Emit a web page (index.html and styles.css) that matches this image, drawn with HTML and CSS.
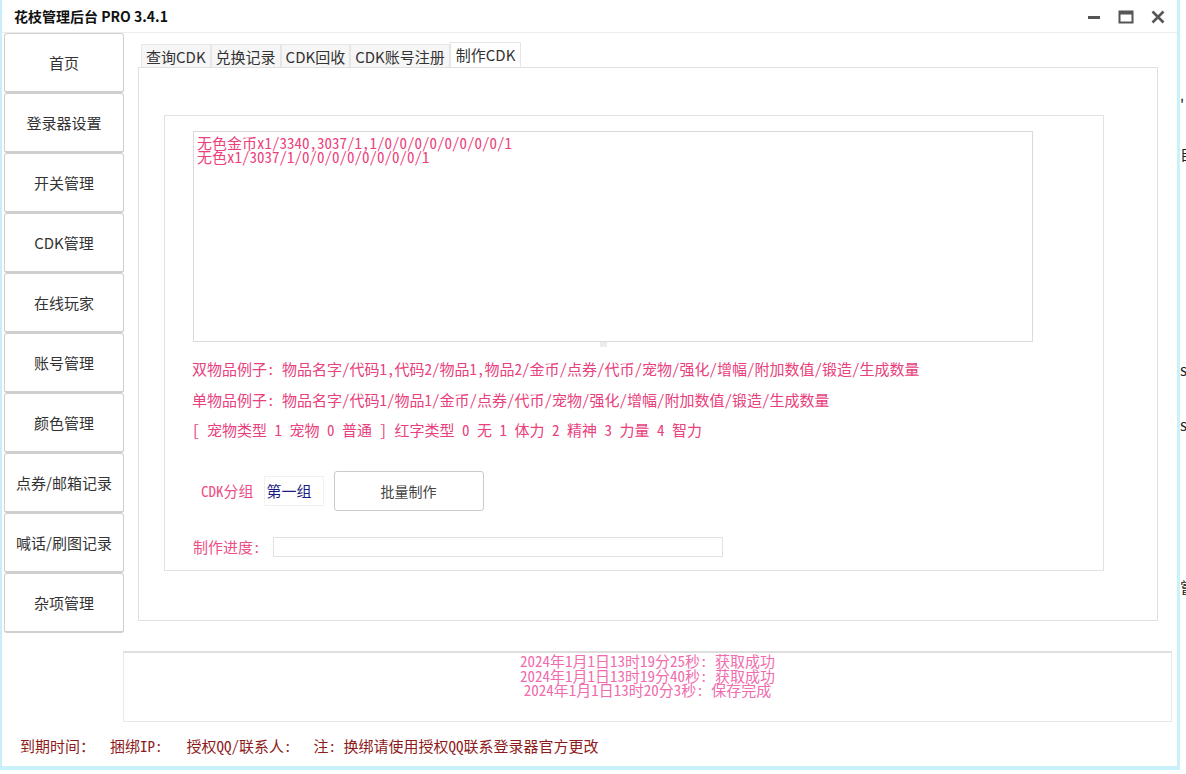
FILE: index.html
```html
<!DOCTYPE html>
<html lang="zh-CN">
<head>
  <meta charset="UTF-8" />
  <title>花枝管理后台 PRO 3.4.1</title>
  <link rel="stylesheet" href="styles.css">
</head>
<body>
  <div class="screen">
    <div class="window">
      <div class="titlebar">
        <span class="title">花枝管理后台 PRO 3.4.1</span>
        <div class="controls">
          <svg width="16" height="16" viewBox="0 0 16 16"><rect x="2" y="7" width="12" height="3" fill="#555"/></svg>
          <svg width="16" height="16" viewBox="0 0 16 16"><rect x="1.5" y="2.5" width="13" height="11" fill="none" stroke="#555" stroke-width="2"/><rect x="1" y="2" width="14" height="3.5" fill="#555"/></svg>
          <svg width="16" height="16" viewBox="0 0 16 16"><path d="M2.5 2.5 L13.5 13.5 M13.5 2.5 L2.5 13.5" stroke="#555" stroke-width="2.6"/></svg>
        </div>
      </div>

      <div class="main">
        <nav class="sidebar">
          <button class="nav-btn">首页</button>
          <button class="nav-btn">登录器设置</button>
          <button class="nav-btn">开关管理</button>
          <button class="nav-btn">CDK管理</button>
          <button class="nav-btn">在线玩家</button>
          <button class="nav-btn">账号管理</button>
          <button class="nav-btn">颜色管理</button>
          <button class="nav-btn">点券/邮箱记录</button>
          <button class="nav-btn">喊话/刷图记录</button>
          <button class="nav-btn">杂项管理</button>
        </nav>

        <section class="content">
          <div class="tabs">
            <span class="tab">查询CDK</span>
            <span class="tab">兑换记录</span>
            <span class="tab">CDK回收</span>
            <span class="tab">CDK账号注册</span>
            <span class="tab active">制作CDK</span>
          </div>

          <div class="panel">
            <div class="group">
              <div class="editor">
                <div>无色金币x1/3340,3037/1,1/0/0/0/0/0/0/0/0/1</div>
                <div>无色x1/3037/1/0/0/0/0/0/0/0/0/1</div>
              </div>
              <span class="grip"></span>

              <div class="hints">
                <p>双物品例子: 物品名字/代码1,代码2/物品1,物品2/金币/点券/代币/宠物/强化/增幅/附加数值/锻造/生成数量</p>
                <p>单物品例子: 物品名字/代码1/物品1/金币/点券/代币/宠物/强化/增幅/附加数值/锻造/生成数量</p>
                <p>[ 宠物类型 1 宠物 0 普通 ] 红字类型 0 无 1 体力 2 精神 3 力量 4 智力</p>
              </div>

              <div class="row-cdk">
                <span class="label">CDK分组</span>
                <span class="group-input">第一组</span>
                <button class="make-btn">批量制作</button>
              </div>

              <div class="row-progress">
                <span class="label">制作进度:</span>
                <span class="progress"></span>
              </div>
            </div>
          </div>
        </section>
      </div>

      <div class="log">
        <div>2024年1月1日13时19分25秒: 获取成功</div>
        <div>2024年1月1日13时19分40秒: 获取成功</div>
        <div>2024年1月1日13时20分3秒: 保存完成</div>
      </div>

      <footer class="status">
        <span>到期时间：</span>
        <span class="gap-a">捆绑IP:</span>
        <span class="gap-b">授权QQ/联系人:</span>
        <span class="gap-c">注: 换绑请使用授权QQ联系登录器官方更改</span>
      </footer>
    </div>

    <div class="behind">
      <span class="frag f1">'</span>
      <span class="frag f2">自</span>
      <span class="frag f3">s</span>
      <span class="frag f4">s</span>
      <span class="frag f5">嘗</span>
    </div>
  </div>
</body>
</html>
```

FILE: styles.css
```css
body {
  margin: 0;
  background: #ffffff;
  font-family: "Noto Sans CJK SC", sans-serif;
  color: #333;
}

.screen {
  display: flex;
  width: 1186px;
  height: 774px;
  overflow: hidden;
}

.window {
  width: 1175px;
  height: 766px;
  background: #ffffff;
  border-left: 2px solid #c9eef8;
  border-right: 3px solid #c9f1fa;
  border-bottom: 4px solid #c9f1fa;
  display: flex;
  flex-direction: column;
}

/* title bar */
.titlebar {
  height: 32px;
  border-bottom: 1px solid #ececec;
  display: flex;
  align-items: center;
  justify-content: space-between;
  padding: 0 11px 0 12px;
}

.title {
  font-size: 14px;
  font-weight: bold;
  color: #111;
  margin-top: -1px;
}

.controls {
  display: flex;
  gap: 16px;
  margin-top: 2px;
}

.controls svg {
  display: block;
}

/* body */
.main {
  display: flex;
  height: 600px;
}

.sidebar {
  width: 120px;
  padding-left: 2px;
  display: flex;
  flex-direction: column;
}

.nav-btn {
  height: 60px;
  width: 120px;
  background: #fff;
  border: 1px solid #cfcfcf;
  border-bottom-width: 2px;
  border-radius: 3px;
  font-family: "Noto Sans CJK SC", sans-serif;
  font-size: 15px;
  color: #333;
  padding: 0;
}

.content {
  flex: 1;
  padding-left: 14px;
}

.tabs {
  display: flex;
  height: 23px;
  margin-top: 11px;
  padding-left: 3px;
  align-items: flex-end;
}

.tab {
  height: 23px;
  line-height: 23px;
  padding: 0 4px;
  font-size: 15px;
  color: #333;
  background: #f6f6f6;
  border: 1px solid #e6e6e6;
  border-bottom: none;
  box-sizing: border-box;
}

.tab.active {
  height: 25px;
  background: #fff;
  padding: 0 5px;
}

.panel {
  width: 1018px;
  height: 552px;
  border: 1px solid #e0e0e0;
  background: #fff;
}

.group {
  width: 938px;
  height: 454px;
  margin: 47px 0 0 25px;
  border: 1px solid #e2e2e2;
}

.editor {
  width: 832px;
  height: 201px;
  margin: 15px 0 0 28px;
  padding: 4px 3px;
  border: 1px solid #dadada;
  font-family: "Noto Sans Mono CJK SC", "Noto Sans CJK SC", monospace;
  font-size: 15px;
  line-height: 14px;
  color: #ec3f7c;
}

.grip {
  display: block;
  width: 7px;
  height: 5px;
  margin-left: 435px;
  background: #ececec;
}

.hints {
  margin-top: 7px;
  padding-left: 27px;
}

.hints p {
  margin: 0;
  height: 30.5px;
  line-height: 30px;
  font-family: "Noto Sans Mono CJK SC", "Noto Sans CJK SC", monospace;
  font-size: 15px;
  color: #e8407c;
  white-space: nowrap;
}

.label {
  font-family: "Noto Sans Mono CJK SC", "Noto Sans CJK SC", monospace;
  font-size: 15px;
  color: #ec4f86;
}

.row-cdk {
  display: flex;
  align-items: center;
  height: 40px;
  margin-top: 25px;
  padding-left: 36px;
}

.group-input {
  width: 56px;
  height: 28px;
  line-height: 28px;
  margin-left: 10px;
  padding-left: 2px;
  border: 1px solid #f0f0f0;
  font-size: 15px;
  color: #1c1c86;
}

.make-btn {
  width: 150px;
  height: 40px;
  margin-left: 10px;
  background: #fff;
  border: 1px solid #cacaca;
  border-radius: 3px;
  font-family: "Noto Sans CJK SC", sans-serif;
  font-size: 14px;
  color: #444;
}

.row-progress {
  display: flex;
  align-items: center;
  height: 20px;
  margin-top: 26px;
  padding-left: 28px;
}

.progress {
  width: 448px;
  height: 18px;
  margin-left: 12px;
  border: 1px solid #e2e2e2;
}

/* log */
.log {
  width: 1047px;
  height: 67px;
  margin: 18px 0 0 121px;
  border: 1px solid #e8e8e8;
  border-top: 2px solid #dedede;
  padding-top: 1px;
  text-align: center;
  font-family: "Noto Sans Mono CJK SC", "Noto Sans CJK SC", monospace;
  font-size: 15px;
  line-height: 14.5px;
  color: #f06cae;
}

/* status */
.status {
  flex: 1;
  display: flex;
  align-items: center;
  padding: 2px 0 0 18px;
  font-family: "Noto Sans Mono CJK SC", "Noto Sans CJK SC", monospace;
  font-size: 15px;
  color: #8e1b1b;
  white-space: nowrap;
}

.gap-a { margin-left: 15px; }
.gap-b { margin-left: 24px; }
.gap-c { margin-left: 22px; }

/* window behind */
.behind {
  flex: 1;
  display: flex;
  flex-direction: column;
  font-size: 15px;
  color: #222;
  overflow: hidden;
}

.frag {
  display: block;
  height: 20px;
  line-height: 20px;
}

.f1 { margin-top: 96px; }
.f2 { margin-top: 28px; }
.f3 { margin-top: 196px; }
.f4 { margin-top: 35px; }
.f5 { margin-top: 142px; }
```
